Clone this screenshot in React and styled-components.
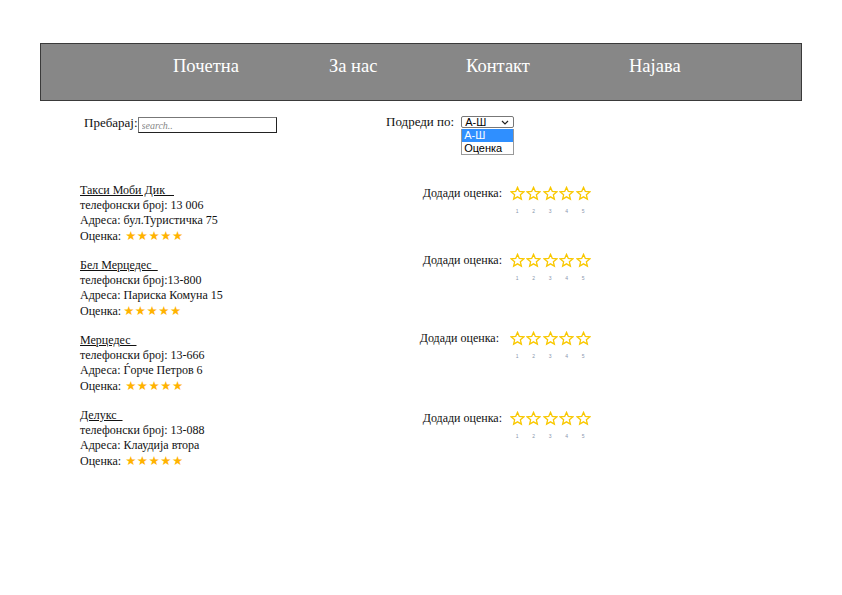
import React from 'react'
import styled, { createGlobalStyle } from 'styled-components'

const Global = createGlobalStyle`
  body { margin: 0; background: #fff; font-family: "Liberation Serif", "Times New Roman", serif; color: #111; }
`

const taxis = [
  { name: 'Такси Моби Дик   ', phone: 'телефонски број: 13 006', addr: 'Адреса: бул.Туристичка 75', shift: 3, sp: 4, lw: 92 },
  { name: 'Бел Мерцедес  ', phone: 'телефонски број:13-800', addr: 'Адреса: Париска Комуна 15', shift: -5, sp: 2, lw: 92 },
  { name: 'Мерцедес  ', phone: 'телефонски број: 13-666', addr: 'Адреса: Ѓорче Петров 6', shift: -2, sp: 4, lw: 89 },
  { name: 'Делукс  ', phone: 'телефонски број: 13-088', addr: 'Адреса: Клаудија втора', shift: 3, sp: 4, lw: 92 },
]

const StarOutline = () => (
  <svg width="15" height="15" viewBox="0 0 24 24">
    <path
      d="M12 2.2l2.9 6.6 7.1.6-5.4 4.7 1.6 7-6.2-3.7-6.2 3.7 1.6-7L2 9.4l7.1-.6z"
      fill="none"
      stroke="#f9c800"
      strokeWidth="2.1"
      strokeLinejoin="miter"
    />
  </svg>
)

function App() {
  return (
    <Page>
      <Global />
      <Nav>
        <NavItem $w={156}>Почетна</NavItem>
        <NavItem $w={137}>За нас</NavItem>
        <NavItem $w={163}>Контакт</NavItem>
        <NavItem>Најава</NavItem>
      </Nav>
      <Tools>
        <SearchLabel>
          Пребарај:<SearchInput placeholder="search.." />
        </SearchLabel>
        <SortLabel>
          Подреди по:
          <SelectWrap>
            <SelectBox>
              А-Ш
              <svg width="8" height="5" viewBox="0 0 8 5"><path d="M1 1l3 3 3-3" fill="none" stroke="#222" strokeWidth="1.2" /></svg>
            </SelectBox>
            <Options>
              <Option $active>А-Ш</Option>
              <Option>Оценка</Option>
            </Options>
          </SelectWrap>
        </SortLabel>
      </Tools>
      <List>
        {taxis.map((t, i) => (
          <Row key={i}>
            <Info>
              <Title>{t.name}</Title>
              <Line>{t.phone}</Line>
              <Line>{t.addr}</Line>
              <Line>Оценка:<Filled $sp={t.sp}>★★★★★</Filled></Line>
            </Info>
            <Rate style={{ marginTop: t.shift }}>
              <RateLabel $w={t.lw}>Додади оценка:</RateLabel>
              <Stars>
                {[1, 2, 3, 4, 5].map((n) => (
                  <Star key={n}>
                    <StarOutline />
                    <Num>{n}</Num>
                  </Star>
                ))}
              </Stars>
            </Rate>
          </Row>
        ))}
      </List>
    </Page>
  )
}

const Page = styled.div`
  width: 842px;
  height: 595px;
  padding-top: 43px;
  box-sizing: border-box;
  overflow: hidden;
`
const Nav = styled.nav`
  margin-left: 40px;
  width: 762px;
  height: 58px;
  box-sizing: border-box;
  background: #878787;
  border: 1px solid #3a3a3a;
  display: flex;
  align-items: center;
  padding-left: 132px;
  padding-bottom: 11px;
`
const NavItem = styled.div`
  width: ${(p) => (p.$w ? p.$w + 'px' : 'auto')};
  color: #fff;
  font-size: 18.5px;
`
const Tools = styled.div`
  display: flex;
  margin-top: 15px;
  padding-left: 84px;
  height: 67px;
  font-size: 13px;
`
const SearchLabel = styled.div`
  display: flex;
  align-items: flex-start;
  width: 302px;
  line-height: 14px;
`
const SearchInput = styled.input`
  margin-top: 1px;
  width: 139px;
  height: 16px;
  box-sizing: border-box;
  border: 1px solid #222;
  border-left-color: #777;
  border-top-color: #777;
  padding: 0 3px;
  font-size: 10px;
  font-family: "Liberation Serif", serif;
  font-style: italic;
  &::placeholder { color: #888; }
`
const SortLabel = styled.div`
  display: flex;
  align-items: flex-start;
  line-height: 12px;
`
const SelectWrap = styled.div`
  position: relative;
  margin-left: 7px;
`
const SelectBox = styled.div`
  width: 53px;
  height: 12px;
  box-sizing: border-box;
  border: 1px solid #777;
  border-radius: 2px;
  font: 11px/10px "Liberation Sans", Arial, sans-serif;
  display: flex;
  align-items: center;
  justify-content: space-between;
  padding: 0 4px 0 3px;
  color: #000;
`
const Options = styled.div`
  position: absolute;
  top: 13px;
  left: 0;
  width: 53px;
  box-sizing: border-box;
  border: 1px solid #999;
  border-top: none;
  background: #fff;
`
const Option = styled.div`
  height: 12.5px;
  font: 11px/12.5px "Liberation Sans", Arial, sans-serif;
  padding-left: 2px;
  background: ${(p) => (p.$active ? '#2f8fff' : '#fff')};
  color: ${(p) => (p.$active ? '#fff' : '#000')};
`
const List = styled.div`
  padding-left: 80px;
  display: flex;
  flex-direction: column;
  gap: 15px;
`
const Row = styled.div`
  display: flex;
  align-items: flex-start;
`
const Info = styled.div`
  width: 330px;
  font-size: 12px;
  line-height: 15px;
`
const Title = styled.div`
  text-decoration: underline;
  white-space: pre;
  height: 15px;
`
const Line = styled.div`
  white-space: pre;
  height: 15px;
`
const Filled = styled.span`
  margin-left: ${(p) => p.$sp}px;
  color: #ffb300;
  font-family: "DejaVu Sans", sans-serif;
  font-size: 12.5px;
  letter-spacing: 0.5px;
`
const Rate = styled.div`
  display: flex;
  align-items: flex-start;
`
const RateLabel = styled.div`
  width: ${(p) => p.$w}px;
  margin-right: ${(p) => 92 - p.$w}px;
  text-align: right;
  font-size: 12px;
  line-height: 15px;
`
const Stars = styled.div`
  display: flex;
  margin-left: 7px;
`
const Star = styled.div`
  width: 16.5px;
  display: flex;
  flex-direction: column;
  align-items: center;
`
const Num = styled.div`
  margin-top: 7px;
  font: 5px/6px "Liberation Sans", Arial, sans-serif;
  color: #8a96ad;
`

export default App
